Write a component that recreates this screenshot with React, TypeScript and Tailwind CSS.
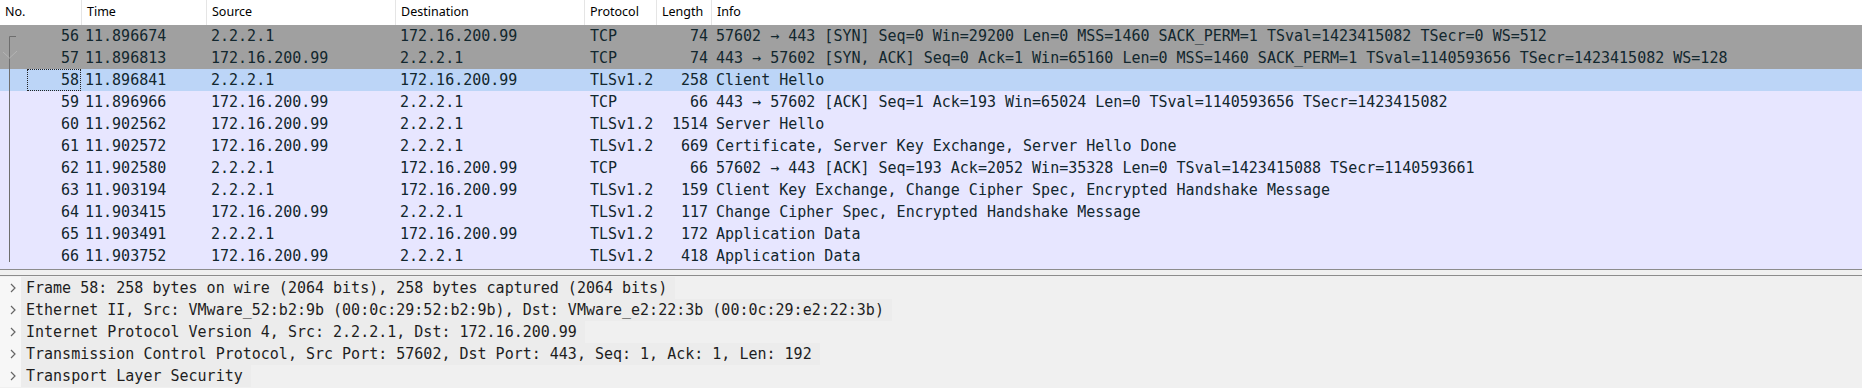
import React from 'react';

type Packet = {
  no: number;
  time: string;
  src: string;
  dst: string;
  proto: string;
  len: number;
  info: string;
  kind: 'gray' | 'sel' | 'tcp';
};

const packets: Packet[] = [
  { no: 56, time: '11.896674', src: '2.2.2.1', dst: '172.16.200.99', proto: 'TCP', len: 74, info: '57602 → 443 [SYN] Seq=0 Win=29200 Len=0 MSS=1460 SACK_PERM=1 TSval=1423415082 TSecr=0 WS=512', kind: 'gray' },
  { no: 57, time: '11.896813', src: '172.16.200.99', dst: '2.2.2.1', proto: 'TCP', len: 74, info: '443 → 57602 [SYN, ACK] Seq=0 Ack=1 Win=65160 Len=0 MSS=1460 SACK_PERM=1 TSval=1140593656 TSecr=1423415082 WS=128', kind: 'gray' },
  { no: 58, time: '11.896841', src: '2.2.2.1', dst: '172.16.200.99', proto: 'TLSv1.2', len: 258, info: 'Client Hello', kind: 'sel' },
  { no: 59, time: '11.896966', src: '172.16.200.99', dst: '2.2.2.1', proto: 'TCP', len: 66, info: '443 → 57602 [ACK] Seq=1 Ack=193 Win=65024 Len=0 TSval=1140593656 TSecr=1423415082', kind: 'tcp' },
  { no: 60, time: '11.902562', src: '172.16.200.99', dst: '2.2.2.1', proto: 'TLSv1.2', len: 1514, info: 'Server Hello', kind: 'tcp' },
  { no: 61, time: '11.902572', src: '172.16.200.99', dst: '2.2.2.1', proto: 'TLSv1.2', len: 669, info: 'Certificate, Server Key Exchange, Server Hello Done', kind: 'tcp' },
  { no: 62, time: '11.902580', src: '2.2.2.1', dst: '172.16.200.99', proto: 'TCP', len: 66, info: '57602 → 443 [ACK] Seq=193 Ack=2052 Win=35328 Len=0 TSval=1423415088 TSecr=1140593661', kind: 'tcp' },
  { no: 63, time: '11.903194', src: '2.2.2.1', dst: '172.16.200.99', proto: 'TLSv1.2', len: 159, info: 'Client Key Exchange, Change Cipher Spec, Encrypted Handshake Message', kind: 'tcp' },
  { no: 64, time: '11.903415', src: '172.16.200.99', dst: '2.2.2.1', proto: 'TLSv1.2', len: 117, info: 'Change Cipher Spec, Encrypted Handshake Message', kind: 'tcp' },
  { no: 65, time: '11.903491', src: '2.2.2.1', dst: '172.16.200.99', proto: 'TLSv1.2', len: 172, info: 'Application Data', kind: 'tcp' },
  { no: 66, time: '11.903752', src: '172.16.200.99', dst: '2.2.2.1', proto: 'TLSv1.2', len: 418, info: 'Application Data', kind: 'tcp' },
];

const details = [
  'Frame 58: 258 bytes on wire (2064 bits), 258 bytes captured (2064 bits)',
  'Ethernet II, Src: VMware_52:b2:9b (00:0c:29:52:b2:9b), Dst: VMware_e2:22:3b (00:0c:29:e2:22:3b)',
  'Internet Protocol Version 4, Src: 2.2.2.1, Dst: 172.16.200.99',
  'Transmission Control Protocol, Src Port: 57602, Dst Port: 443, Seq: 1, Ack: 1, Len: 192',
  'Transport Layer Security',
];

const rowBg = {
  gray: 'bg-[#a0a0a0]',
  sel: 'bg-[#bcd5f7]',
  tcp: 'bg-[#e7e6ff]',
};

const mono = { fontFamily: '"DejaVu Sans Mono", "Liberation Mono", monospace' };

const HeaderCell: React.FC<{ w: string; label: string }> = ({ w, label }) => (
  <div className={`${w} h-full flex items-center pl-[5px] border-r border-[#e5e5e5] shrink-0`}>
    {label}
  </div>
);

// related-packets line drawn in the No. column
const Related: React.FC<{ idx: number }> = ({ idx }) => (
  <svg className="absolute left-0 top-0" width="22" height="22" viewBox="0 0 22 22">
    {idx === 0 ? (
      <path d="M9.5 11.5 H16 M9.5 11.5 V22" stroke="#6e6e6e" strokeWidth="1" fill="none" />
    ) : idx === packets.length - 1 ? (
      <path d="M9.5 0 V17" stroke="#6e6e6e" strokeWidth="1" fill="none" />
    ) : (
      <path d="M9.5 0 V22" stroke="#6e6e6e" strokeWidth="1" fill="none" />
    )}
    {idx === 1 && <path d="M3 5 L9.5 11 L17 4" stroke="#b4b4b4" strokeWidth="1" fill="none" />}
  </svg>
);

const App: React.FC = () => {
  return (
    <div className="w-[1862px] h-[388px] bg-[#f0f0f0] flex flex-col overflow-hidden">
      {/* packet list */}
      <div className="flex flex-col bg-white border-b border-[#8c8c8c]">
        <div
          className="h-[25px] flex text-[12.5px] text-black bg-white"
          style={{ fontFamily: '"Noto Sans", "Open Sans", sans-serif' }}
        >
          <HeaderCell w="w-[82px]" label="No." />
          <HeaderCell w="w-[125px]" label="Time" />
          <HeaderCell w="w-[189px]" label="Source" />
          <HeaderCell w="w-[189px]" label="Destination" />
          <HeaderCell w="w-[72px]" label="Protocol" />
          <HeaderCell w="w-[55px]" label="Length" />
          <div className="flex-1 h-full flex items-center pl-[5px]">Info</div>
        </div>
        <div className="flex flex-col pb-[2px] bg-[#e7e6ff]">
          {packets.map((p, i) => (
            <div
              key={p.no}
              className={`h-[22px] flex items-center text-[15px] leading-[22px] text-[#12272e] whitespace-nowrap ${rowBg[p.kind]}`}
              style={mono}
            >
              <div className="relative w-[82px] h-full shrink-0 text-right pr-[3px]">
                <Related idx={i} />
                {p.kind === 'sel' && (
                  <div className="absolute left-[27px] right-[1px] top-0 bottom-0 border border-dotted border-[#222]" />
                )}
                <span className="relative">{p.no}</span>
              </div>
              <div className="w-[125px] shrink-0 pl-[3px]">{p.time}</div>
              <div className="w-[189px] shrink-0 pl-[4px]">{p.src}</div>
              <div className="w-[189px] shrink-0 pl-[4px]">{p.dst}</div>
              <div className="w-[72px] shrink-0 pl-[5px]">{p.proto}</div>
              <div className="w-[55px] shrink-0 text-right pr-[4px]">{p.len}</div>
              <div className="flex-1 pl-[4px] overflow-hidden">{p.info}</div>
            </div>
          ))}
        </div>
      </div>

      {/* splitter */}
      <div className="h-[6px] bg-[#f0f0f0] border-b border-[#8c8c8c]" />

      {/* packet details */}
      <div className="flex-1 flex flex-col bg-[#f0f0f0] pt-[1px]">
        {details.map((d) => (
          <div
            key={d}
            className="h-[22px] flex items-center text-[15px] text-[#1e1e1e] whitespace-nowrap"
            style={mono}
          >
            <div className="w-[21px] h-full shrink-0 flex items-center justify-end pr-[4px] bg-[#f7f7f7]">
              <svg width="8" height="12" viewBox="0 0 8 12">
                <path d="M2 2 L6 6 L2 10" stroke="#666" strokeWidth="1.2" fill="none" />
              </svg>
            </div>
            <div className="pl-[5px] pr-2 h-full flex items-center bg-[#ececec]">{d}</div>
          </div>
        ))}
      </div>
    </div>
  );
};

export default App;
